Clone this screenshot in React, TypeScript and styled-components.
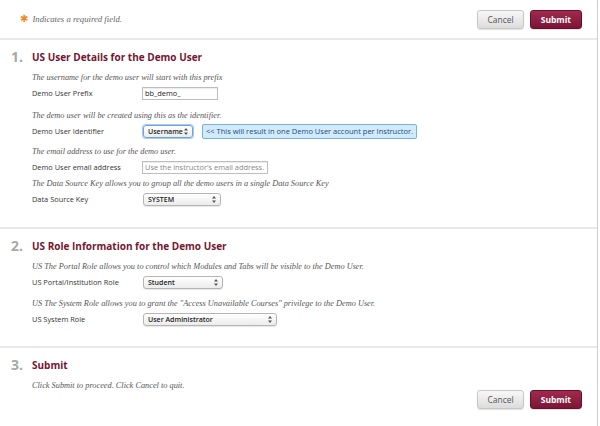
import React from "react";
import styled, { createGlobalStyle } from "styled-components";

const GlobalStyle = createGlobalStyle`
  html, body {
    margin: 0;
    padding: 0;
    background: #ffffff;
  }
  body {
    font-family: "Open Sans", "Liberation Sans", Arial, sans-serif;
    color: #333;
  }
`;

const Page = styled.div`
  width: 597px;
  height: 426px;
  border-right: 1px solid #cfcfcf;
  background: #fff;
  overflow: hidden;
`;

const TopBar = styled.div`
  height: 38px;
  display: flex;
  align-items: center;
  justify-content: space-between;
  padding: 0 15px 0 20px;
`;

const Required = styled.div`
  display: flex;
  align-items: center;
  gap: 4px;
  font-family: "Liberation Serif", "DejaVu Serif", serif;
  font-style: italic;
  font-size: 8.7px;
  color: #666;
`;

const Star = styled.span`
  color: #f08a1c;
  font-family: "DejaVu Sans", sans-serif;
  font-style: normal;
  font-weight: bold;
  font-size: 10px;
  line-height: 1;
`;

const ButtonBar = styled.div`
  display: flex;
  gap: 6px;
`;

const Button = styled.button<{ $primary?: boolean }>`
  height: 19px;
  padding: 0 ${(p) => (p.$primary ? "10px" : "9px")};
  border-radius: 3px;
  font-family: "Open Sans", "Liberation Sans", sans-serif;
  font-size: 8.5px;
  font-weight: ${(p) => (p.$primary ? 700 : 400)};
  color: ${(p) => (p.$primary ? "#fff" : "#555")};
  border: 1px solid ${(p) => (p.$primary ? "#6a0f2b" : "#c6c6c6")};
  background: ${(p) =>
    p.$primary
      ? "linear-gradient(#a02a4e, #7c1636)"
      : "linear-gradient(#f8f8f8, #dcdcdc)"};
  box-shadow: 0 1px 1px rgba(0, 0, 0, 0.12);
`;

const Section = styled.section<{ $bottom?: number }>`
  border-top: 2px solid #e8e8e8;
  padding: 9px 0 ${(p) => p.$bottom ?? 0}px 11px;
`;

const SectionHead = styled.div`
  display: flex;
  align-items: center;
  height: 16px;
  line-height: 16px;
  margin-bottom: 6px;
`;

const StepNum = styled.span`
  width: 21px;
  font-family: "Open Sans", "Liberation Sans", sans-serif;
  font-size: 14px;
  font-weight: 700;
  color: #a8a8a8;
`;

const StepTitle = styled.h2`
  margin: 0;
  font-family: "Open Sans", "Liberation Sans", sans-serif;
  font-size: 10px;
  font-weight: 700;
  color: #76162f;
`;

const Body = styled.div`
  padding-left: 21px;
`;

const Help = styled.p`
  margin: 0;
  height: 14px;
  line-height: 14px;
  white-space: nowrap;
  font-family: "Liberation Serif", "DejaVu Serif", serif;
  font-style: italic;
  font-size: 8.3px;
  color: #555;
`;

const Row = styled.div<{ $gap?: number }>`
  display: flex;
  align-items: center;
  height: 16px;
  margin-bottom: ${(p) => p.$gap ?? 6}px;
`;

const Label = styled.label`
  width: 110px;
  font-size: 7.4px;
  color: #333;
`;

const TextInput = styled.div<{ $w: number; $placeholder?: boolean }>`
  width: ${(p) => p.$w}px;
  height: 13px;
  box-sizing: border-box;
  border: 1px solid #bdbdbd;
  box-shadow: inset 0 1px 1px rgba(0, 0, 0, 0.08);
  padding: 0 2px;
  font-size: 7.4px;
  line-height: 11px;
  white-space: nowrap;
  overflow: hidden;
  color: ${(p) => (p.$placeholder ? "#888" : "#222")};
`;

const Select = styled.div<{ $w: number; $focus?: boolean }>`
  width: ${(p) => p.$w}px;
  height: 13px;
  box-sizing: border-box;
  display: flex;
  align-items: center;
  justify-content: space-between;
  padding: 0 4px 0 4px;
  margin-left: 1px;
  border: 1px solid ${(p) => (p.$focus ? "#6aa7d8" : "#b5b5b5")};
  border-radius: 3px;
  background: linear-gradient(#ffffff, #ececec);
  box-shadow: ${(p) =>
    p.$focus ? "0 0 0 1px #a9cdee" : "0 1px 1px rgba(0,0,0,0.1)"};
  font-size: 7px;
  font-weight: 600;
  color: #222;
  white-space: nowrap;
  overflow: hidden;
`;

const Note = styled.div`
  margin-left: 9px;
  height: 15px;
  box-sizing: border-box;
  padding: 0 3px;
  display: flex;
  align-items: center;
  border: 1px solid #74b4e4;
  border-radius: 2px;
  background: #d3eafa;
  font-size: 7.5px;
  white-space: nowrap;
  color: #124f86;
`;

const BottomBar = styled.div`
  display: flex;
  justify-content: flex-end;
  padding-right: 15px;
  margin-top: -3px;
`;

function Arrows() {
  return (
    <svg width="4" height="7" viewBox="0 0 4 7">
      <path d="M2 0 L4 2.5 H0 Z M2 7 L4 4.5 H0 Z" fill="#555" />
    </svg>
  );
}

function Dropdown(props: { width: number; value: string; focus?: boolean }) {
  return (
    <Select $w={props.width} $focus={props.focus}>
      <span>{props.value}</span>
      <Arrows />
    </Select>
  );
}

export default function App() {
  return (
    <>
      <GlobalStyle />
      <Page>
        <TopBar>
          <Required>
            <Star>✱</Star>
            Indicates a required field.
          </Required>
          <ButtonBar>
            <Button>Cancel</Button>
            <Button $primary>Submit</Button>
          </ButtonBar>
        </TopBar>

        <Section $bottom={20}>
          <SectionHead>
            <StepNum>1.</StepNum>
            <StepTitle>US User Details for the Demo User</StepTitle>
          </SectionHead>
          <Body>
            <Help>The username for the demo user will start with this prefix</Help>
            <Row $gap={8}>
              <Label>Demo User Prefix</Label>
              <TextInput $w={76}>bb_demo_</TextInput>
            </Row>
            <Help>The demo user will be created using this as the identifier.</Help>
            <Row>
              <Label>Demo User Identifier</Label>
              <Dropdown width={50} value="Username" focus />
              <Note>&lt;&lt; This will result in one Demo User account per Instructor.</Note>
            </Row>
            <Help>The email address to use for the demo user.</Help>
            <Row $gap={2}>
              <Label>Demo User email address</Label>
              <TextInput $w={126} $placeholder>
                Use the instructor's email address.
              </TextInput>
            </Row>
            <Help>The Data Source Key allows you to group all the demo users in a single Data Source Key</Help>
            <Row $gap={0}>
              <Label>Data Source Key</Label>
              <Dropdown width={78} value="SYSTEM" />
            </Row>
          </Body>
        </Section>

        <Section $bottom={19}>
          <SectionHead>
            <StepNum>2.</StepNum>
            <StepTitle>US Role Information for the Demo User</StepTitle>
          </SectionHead>
          <Body>
            <Help>US The Portal Role allows you to control which Modules and Tabs will be visible to the Demo User.</Help>
            <Row $gap={7}>
              <Label>US Portal/Institution Role</Label>
              <Dropdown width={80} value="Student" />
            </Row>
            <Help>US The System Role allows you to grant the "Access Unavailable Courses" privilege to the Demo User.</Help>
            <Row $gap={0}>
              <Label>US System Role</Label>
              <Dropdown width={134} value="User Administrator" />
            </Row>
          </Body>
        </Section>

        <Section>
          <SectionHead>
            <StepNum>3.</StepNum>
            <StepTitle>Submit</StepTitle>
          </SectionHead>
          <Body>
            <Help>Click Submit to proceed. Click Cancel to quit.</Help>
          </Body>
          <BottomBar>
            <ButtonBar>
              <Button>Cancel</Button>
              <Button $primary>Submit</Button>
            </ButtonBar>
          </BottomBar>
        </Section>
      </Page>
    </>
  );
}
